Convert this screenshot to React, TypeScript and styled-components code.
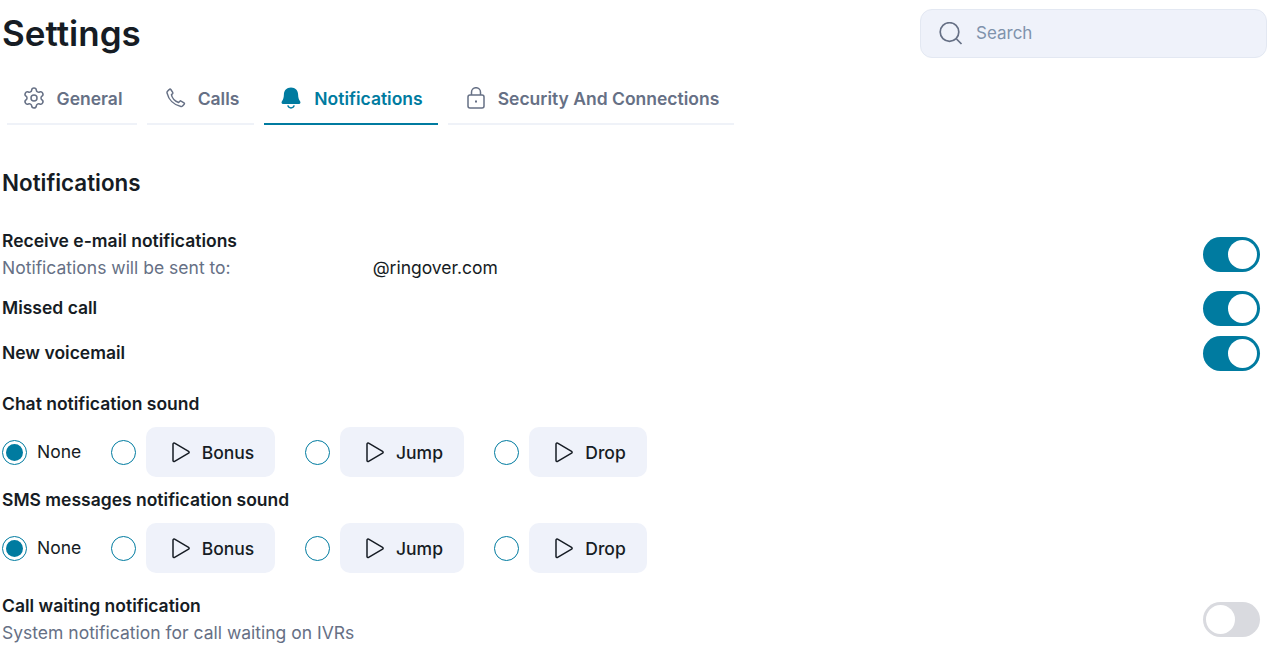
import styled, { createGlobalStyle } from "styled-components";
import { ReactNode } from "react";
import { Settings } from "lucide-react";

const GlobalStyle = createGlobalStyle`
    html, body {
        margin: 0;
        padding: 0;
        background: #fff;
        overflow: hidden;
    }
    body {
        font-family: Inter, "Noto Sans", sans-serif;
        color: #161c24;
    }
`;

const Page = styled.div`
    width: 1267px;
    height: 647px;
    overflow: hidden;
    padding-left: 2px;
    box-sizing: border-box;
`;

const Header = styled.header`
    display: flex;
    justify-content: space-between;
    align-items: flex-start;
    height: 73px;
    padding-top: 9px;
    box-sizing: border-box;
`;

const Title = styled.h1`
    margin: 0;
    font-size: 35px;
    line-height: 48px;
    font-weight: 600;
`;

const SearchBox = styled.div`
    width: 347px;
    height: 49px;
    box-sizing: border-box;
    display: flex;
    align-items: center;
    gap: 13px;
    padding-left: 18px;
    background: #eff2fa;
    border: 1px solid #e3e8f2;
    border-radius: 12px;
    color: #7f93ac;
    font-size: 17px;
`;

const SearchText = styled.span`
    margin-bottom: 2px;
`;

const Tabs = styled.nav`
    display: flex;
    gap: 10px;
    padding-left: 5px;
`;

const Tab = styled.div<{ $active?: boolean; $width: number; $gap: number; $inset?: number }>`
    width: ${(p) => p.$width}px;
    height: 52px;
    box-sizing: border-box;
    display: flex;
    align-items: center;
    justify-content: center;
    gap: ${(p) => p.$gap}px;
    padding-left: ${(p) => p.$inset ?? 0}px;
    font-size: 17.5px;
    font-weight: 600;
    color: ${(p) => (p.$active ? "#007ba0" : "#667085")};
    border-bottom: 2px solid ${(p) => (p.$active ? "#007ba0" : "#eff2f8")};
`;

const SectionTitle = styled.h2`
    margin: 43px 0 0;
    font-size: 22.4px;
    line-height: 29px;
    font-weight: 600;
`;

const Row = styled.div<{ $top: number; $height: number }>`
    display: flex;
    justify-content: space-between;
    align-items: center;
    height: ${(p) => p.$height}px;
    margin-top: ${(p) => p.$top}px;
    padding-right: 7px;
`;

const RowText = styled.div<{ $raised: boolean }>`
    padding-bottom: ${(p) => (p.$raised ? 2 : 0)}px;
`;

const Label = styled.div`
    font-size: 17.5px;
    line-height: 27px;
    font-weight: 600;
`;

const Hint = styled.div`
    font-size: 17.5px;
    line-height: 27px;
    color: #667085;
    display: flex;
`;

const Email = styled.span`
    color: #161c24;
    margin-left: 142px;
`;

const SoundHeading = styled(Label)<{ $top: number }>`
    margin-top: ${(p) => p.$top}px;
`;

const SoundRow = styled.div`
    display: flex;
    align-items: center;
    height: 50px;
    margin-top: 10px;
`;

const RadioCircle = styled.span<{ $checked?: boolean }>`
    width: 25px;
    height: 25px;
    box-sizing: border-box;
    flex: none;
    border-radius: 50%;
    border: 1.5px solid #007ba0;
    display: flex;
    align-items: center;
    justify-content: center;

    &::after {
        content: "";
        display: ${(p) => (p.$checked ? "block" : "none")};
        width: 17px;
        height: 17px;
        border-radius: 50%;
        background: #007ba0;
    }
`;

const NoneLabel = styled.span`
    font-size: 17.5px;
    color: #161c24;
    margin: 0 30px 2px 10px;
    width: 44px;
`;

const SoundOption = styled.div`
    display: flex;
    align-items: center;
    gap: 10px;
    margin-right: 30px;
`;

const PlayButton = styled.div<{ $width: number }>`
    width: ${(p) => p.$width}px;
    height: 50px;
    box-sizing: border-box;
    display: flex;
    align-items: center;
    justify-content: center;
    gap: 12px;
    padding-left: 5px;
    background: #eff2fa;
    border-radius: 10px;
    font-size: 17.5px;
    font-weight: 500;
`;

const ToggleTrack = styled.div<{ $on?: boolean }>`
    width: 57px;
    height: 35px;
    box-sizing: border-box;
    padding: 3px;
    flex: none;
    border-radius: 18px;
    background: ${(p) => (p.$on ? "#007ba0" : "#d9dadf")};
    display: flex;
    justify-content: ${(p) => (p.$on ? "flex-end" : "flex-start")};

    &::after {
        content: "";
        width: 29px;
        height: 29px;
        border-radius: 50%;
        background: #fff;
    }
`;

function PhoneIcon() {
    return (
        <svg width="20" height="20" viewBox="0 0 20 20" fill="none" stroke="#667085" strokeWidth="1.5" strokeLinejoin="round">
            <path d="M1.5 3.2 3.4 1.4c.4-.4 1-.4 1.4.1l1.900 2.900c.3.4.2.9-.1 1.200L5.400 6.700c.6 3.300 3.700 6.700 7.200 7.800l1.300-1.300c.3-.3.8-.4 1.200-.1l2.900 1.700c.5.300.6 1 .2 1.400l-1.700 1.800c-.4.400-1 .6-1.600.4C7.700 17 2.600 11.500 1 4.800c-.1-.6.100-1.200.5-1.600z" />
        </svg>
    );
}

function BellIcon() {
    return (
        <svg width="20" height="22" viewBox="0 0 20 22" fill="#007ba0">
            <path d="M10 .5C5.500 .5 3 3.500 2.900 7.500c-.1 3.200-.8 5-2 6.800-.7 1.100-.4 2.700 1.100 2.700h16c1.500 0 1.800-1.600 1.100-2.700-1.200-1.800-1.900-3.600-2-6.800C17 3.500 14.500 .5 10 .5z" />
            <path d="M6.800 18.400c.4 1.500 1.600 2.500 3.200 2.500s2.800-1 3.200-2.500" fill="none" stroke="#007ba0" strokeWidth="1.500" />
        </svg>
    );
}

function LockIcon() {
    return (
        <svg width="18" height="22" viewBox="0 0 18 22" fill="none" stroke="#667085" strokeWidth="1.500">
            <rect x="1" y="8" width="16" height="13" rx="2" />
            <path d="M4.500 8V5.200a4.500 4.500 0 0 1 9 0V8" />
            <path d="M9 13.500v2" strokeWidth="2" />
        </svg>
    );
}

function SearchIcon() {
    return (
        <svg width="24" height="23" viewBox="0 0 24 23" fill="none" stroke="#667085" strokeWidth="1.700">
            <circle cx="10.500" cy="10" r="9.300" />
            <path d="M17.500 17l5 5" />
        </svg>
    );
}

function PlayIcon() {
    return (
        <svg width="18" height="21" viewBox="0 0 18 21" fill="none" stroke="#161c24" strokeWidth="1.500" strokeLinejoin="round">
            <path d="M1 2.200c0-.9.900-1.400 1.600-1l14 8.200c.7.400.7 1.400 0 1.800l-14 8.200c-.7.400-1.600-.1-1.600-1z" />
        </svg>
    );
}

const SOUNDS = [
    { name: "Bonus", width: 129 },
    { name: "Jump", width: 124 },
    { name: "Drop", width: 118 },
];

function SoundChoices(): JSX.Element {
    return (
        <SoundRow>
            <RadioCircle $checked />
            <NoneLabel>None</NoneLabel>
            {SOUNDS.map((sound) => (
                <SoundOption key={sound.name}>
                    <RadioCircle />
                    <PlayButton $width={sound.width}>
                        <PlayIcon />
                        {sound.name}
                    </PlayButton>
                </SoundOption>
            ))}
        </SoundRow>
    );
}

function SettingRow({ top, height, on, children }: { top: number; height: number; on?: boolean; children: ReactNode }) {
    return (
        <Row $top={top} $height={height}>
            <RowText $raised={height === 35}>{children}</RowText>
            <ToggleTrack $on={on} />
        </Row>
    );
}

export default function App(): JSX.Element {
    return (
        <Page>
            <GlobalStyle />
            <Header>
                <Title>Settings</Title>
                <SearchBox>
                    <SearchIcon />
                    <SearchText>Search</SearchText>
                </SearchBox>
            </Header>
            <Tabs>
                <Tab $width={130} $gap={11}>
                    <Settings size={24} color="#667085" strokeWidth={1.5} />
                    General
                </Tab>
                <Tab $width={107} $gap={12} $inset={4}>
                    <PhoneIcon />
                    Calls
                </Tab>
                <Tab $width={174} $gap={13} $active $inset={2}>
                    <BellIcon />
                    Notifications
                </Tab>
                <Tab $width={286} $gap={13} $inset={4}>
                    <LockIcon />
                    Security And Connections
                </Tab>
            </Tabs>
            <SectionTitle>Notifications</SectionTitle>
            <SettingRow top={30} height={54} on>
                <Label>Receive e-mail notifications</Label>
                <Hint>
                    Notifications will be sent to:
                    <Email>@ringover.com</Email>
                </Hint>
            </SettingRow>
            <SettingRow top={10} height={35} on>
                <Label>Missed call</Label>
            </SettingRow>
            <SettingRow top={10} height={35} on>
                <Label>New voicemail</Label>
            </SettingRow>
            <SoundHeading $top={19}>Chat notification sound</SoundHeading>
            <SoundChoices />
            <SoundHeading $top={9}>SMS messages notification sound</SoundHeading>
            <SoundChoices />
            <SettingRow top={19} height={54}>
                <Label>Call waiting notification</Label>
                <Hint>System notification for call waiting on IVRs</Hint>
            </SettingRow>
        </Page>
    );
}
